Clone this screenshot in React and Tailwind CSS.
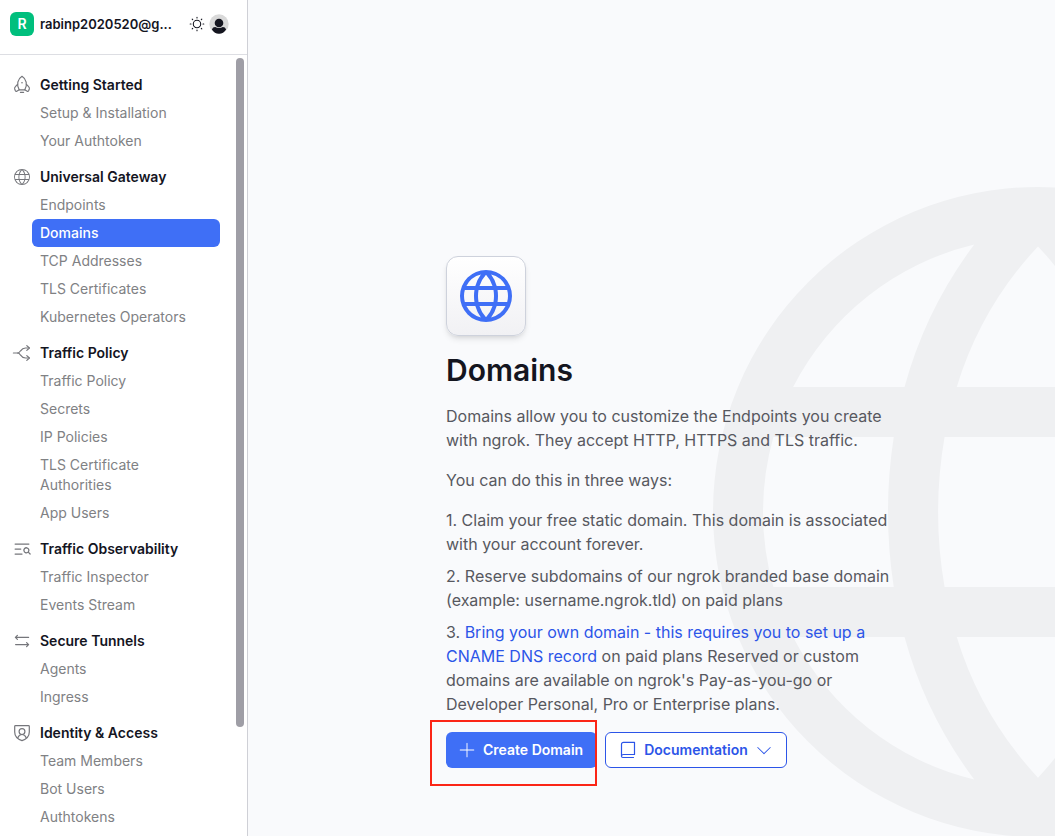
import { PiGlobe, PiGlobeLight, PiListMagnifyingGlass, PiPlusLight, PiCaretDownLight } from "react-icons/pi";

function Glyph({ children }) {
  return (
    <svg viewBox="0 0 20 20" className="size-5" fill="none" stroke="currentColor" strokeWidth="1.2" strokeLinecap="round" strokeLinejoin="round" aria-hidden="true">
      {children}
    </svg>
  );
}

function RocketIcon() {
  return (
    <Glyph>
      <path d="M7.2 14.8C4.2 9.8 5.6 4 10 1.3C14.4 4 15.8 9.8 12.8 14.8Z" />
      <path d="M5.5 9.4L3.4 11.6C2.7 12.3 2.4 13.1 2.7 14L3.4 15.8C3.7 16.5 4.3 16.6 4.8 16.3L7.2 14.8" />
      <path d="M14.5 9.4L16.6 11.6C17.3 12.3 17.6 13.1 17.3 14L16.6 15.8C16.3 16.5 15.7 16.6 15.2 16.3L12.8 14.8" />
      <path d="M8.4 17.3H11.6" />
      <circle cx="10" cy="7.8" r="0.8" fill="currentColor" stroke="none" />
    </Glyph>
  );
}

function BranchIcon() {
  return (
    <Glyph>
      <path d="M1.4 10H5.6" />
      <path d="M17.2 5H13.5C10.5 5 9.6 6.3 8.6 7.8C7.7 9.3 7 10 5.6 10C7 10 7.7 10.7 8.6 12.2C9.6 13.7 10.5 15 13.5 15H17.2" />
      <path d="M14.8 2.6L17.4 5L14.8 7.4M14.8 12.6L17.4 15L14.8 17.4" />
    </Glyph>
  );
}

function SwapIcon() {
  return (
    <Glyph>
      <path d="M16.6 6.4H3.4M5.4 4.4L3.4 6.4L5.4 8.4M3.6 13.6H16.6M14.6 11.6L16.6 13.6L14.6 15.6" />
    </Glyph>
  );
}

function ShieldUserIcon() {
  return (
    <Glyph>
      <path d="M3.5 2.7H16.5C17 2.7 17.3 3 17.3 3.5V9C17.3 13.6 13.6 16.4 10 17.6C6.4 16.4 2.7 13.6 2.7 9V3.5C2.7 3 3 2.7 3.5 2.7Z" />
      <circle cx="10" cy="8.6" r="2.9" />
      <path d="M5.8 14.7C6.6 12.6 8.2 11.5 10 11.5C11.8 11.5 13.4 12.6 14.2 14.7" />
    </Glyph>
  );
}

function BookIcon() {
  return (
    <Glyph>
      <path d="M3.5 16.3V4.3C3.5 3 4.3 2.3 5.5 2.3H16.5V14.5H5.5C4.3 14.5 3.5 15.2 3.5 16.3C3.5 17.1 4 17.5 4.8 17.5H15.5" />
    </Glyph>
  );
}

function SunIcon() {
  return (
    <svg viewBox="0 0 16 16" className="size-4" fill="none" stroke="currentColor" strokeWidth="1.1" strokeLinecap="round" aria-hidden="true">
      <circle cx="8" cy="8" r="3.7" />
      <path d="M8 1.2V2M8 14V14.8M1.2 8H2M14 8H14.8M3.2 3.2L3.7 3.7M12.3 12.3L12.8 12.8M3.2 12.8L3.7 12.3M12.3 3.7L12.8 3.2" />
    </svg>
  );
}

function UserIcon() {
  return (
    <svg viewBox="0 0 20 20" className="size-5" aria-hidden="true">
      <circle cx="10" cy="10" r="9.7" fill="#d9d9d9" />
      <circle cx="10" cy="9" r="4.3" fill="#14151f" />
      <path d="M2.9 15.4C3.6 13.7 4.6 12.9 6.2 12.9C8.3 14.4 11.7 14.4 13.8 12.9C15.4 12.9 16.4 13.7 17.1 15.4C15.5 18.2 12.9 19.7 10 19.7C7.1 19.7 4.5 18.2 2.9 15.4Z" fill="#14151f" />
    </svg>
  );
}

const groups = [
  { title: "Getting Started", icon: <RocketIcon />, items: ["Setup & Installation", "Your Authtoken"] },
  {
    title: "Universal Gateway",
    icon: <PiGlobeLight className="size-5" aria-hidden="true" />,
    items: ["Endpoints", "Domains", "TCP Addresses", "TLS Certificates", "Kubernetes Operators"],
  },
  {
    title: "Traffic Policy",
    icon: <BranchIcon />,
    items: ["Traffic Policy", "Secrets", "IP Policies", "TLS Certificate Authorities", "App Users"],
  },
  {
    title: "Traffic Observability",
    icon: <PiListMagnifyingGlass className="size-5" aria-hidden="true" />,
    items: ["Traffic Inspector", "Events Stream"],
  },
  { title: "Secure Tunnels", icon: <SwapIcon />, items: ["Agents", "Ingress"] },
  { title: "Identity & Access", icon: <ShieldUserIcon />, items: ["Team Members", "Bot Users", "Authtokens"] },
];

function NavGroup({ title, icon, items }) {
  return (
    <section>
      <h2 className="flex items-center gap-2 py-1 pl-3 font-semibold text-[#14151f]">
        <span className="text-[#75767b]">{icon}</span>
        {title}
      </h2>
      <ul className="pl-8">
        {items.map((item) => (
          <li key={item}>
            <a
              href="#"
              aria-current={item === "Domains" ? "page" : undefined}
              className={
                item === "Domains"
                  ? "block rounded-md bg-[#3f6ff6] px-2 py-1 font-medium text-white"
                  : "block rounded-md px-2 py-1 text-[#808184]"
              }
            >
              <span className="block max-w-40">{item}</span>
            </a>
          </li>
        ))}
      </ul>
    </section>
  );
}

function Sidebar() {
  return (
    <aside className="flex w-62 shrink-0 flex-col border-r border-[#cfd0d6] bg-white text-sm">
      <header className="flex h-[55px] shrink-0 items-start border-b border-[#dddee3] pt-3 pr-[18px] pl-[10px]">
        <button type="button" className="flex min-w-0 items-center gap-[6px] text-[13px] font-semibold text-[#14151f]">
          <span className="flex size-6 items-center justify-center rounded-md bg-[#00bf7d] text-sm font-semibold text-white">R</span>
          rabinp2020520@g...
        </button>
        <div className="ml-auto flex h-6 items-center gap-1 text-[#14151f]">
          <button type="button" aria-label="Theme"><SunIcon /></button>
          <button type="button" aria-label="Account"><UserIcon /></button>
        </div>
      </header>
      <div className="flex min-h-0 flex-1">
        <nav className="flex flex-1 flex-col gap-2 overflow-hidden pt-4 pr-4">
          {groups.map((group) => (
            <NavGroup key={group.title} {...group} />
          ))}
        </nav>
        <div className="mr-[3px] flex w-2 flex-col pt-[3px]">
          <div className="h-[86%] rounded-full bg-[#9f9ea6]" />
        </div>
      </div>
    </aside>
  );
}

export default function App() {
  return (
    <div className="flex h-screen overflow-hidden bg-[#f9fafc] font-['Inter',sans-serif]">
      <Sidebar />
      <main className="relative flex min-w-0 flex-1 justify-center overflow-hidden pt-64 pl-[37px]">
        <PiGlobe className="absolute top-28 -right-[383px] size-[800px] text-[#eff0f2]" aria-hidden="true" />
        <div className="relative w-md">
          <div className="flex size-20 items-center justify-center rounded-xl border border-[#ced2dc] bg-linear-to-b from-white to-[#f1f1f4] text-[#3f6ff6] shadow-md">
            <PiGlobe className="size-16" aria-hidden="true" />
          </div>
          <h1 className="mt-4 text-3xl leading-9 font-semibold text-[#14151f]">Domains</h1>
          <div className="mt-4 text-base text-[#57585f]">
            <p>Domains allow you to customize the Endpoints you create with ngrok. They accept HTTP, HTTPS and TLS traffic.</p>
            <p className="mt-4">You can do this in three ways:</p>
            <div className="mt-4 flex flex-col gap-2">
              <p>1. Claim your free static domain. This domain is associated with your account forever.</p>
              <p>2. Reserve subdomains of our ngrok branded base domain (example: username.ngrok.tld) on paid plans</p>
              <p>
                3.{" "}
                <a href="#" className="text-[#2c55e8]">Bring your own domain - this requires you to set up a CNAME DNS record</a>{" "}
                on paid plans Reserved or custom domains are available on ngrok's Pay-as-you-go or Developer Personal, Pro or Enterprise plans.
              </p>
            </div>
          </div>
          <div className="mt-4 flex gap-2 text-sm font-semibold">
            <div className="relative">
              <button type="button" className="flex h-9 w-[151px] items-center gap-[6px] rounded-md bg-[#3f6ff6] pl-[11px] whitespace-nowrap text-white">
                <PiPlusLight className="size-5" aria-hidden="true" />
                Create Domain
              </button>
              <div className="pointer-events-none absolute -top-3 right-0 -bottom-[18px] -left-4 border-2 border-[#fb2516]" />
            </div>
            <button type="button" className="flex h-9 w-[182px] items-center justify-center gap-[6px] rounded-md border border-[#2c55e8] bg-white text-[#2c55e8]">
              <BookIcon />
              Documentation
              <PiCaretDownLight className="size-5" aria-hidden="true" />
            </button>
          </div>
        </div>
      </main>
    </div>
  );
}
